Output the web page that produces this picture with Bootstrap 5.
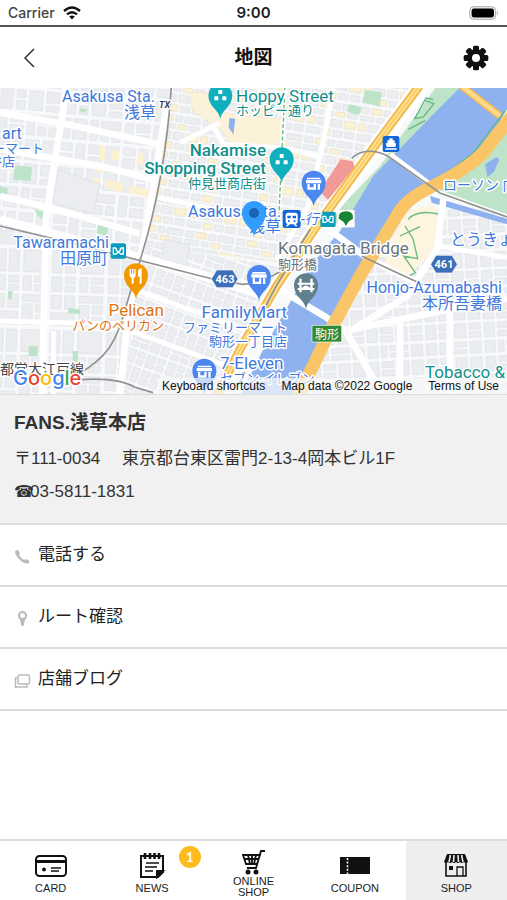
<!DOCTYPE html>
<html lang="ja">
<head>
<meta charset="utf-8">
<meta name="viewport" content="width=device-width, initial-scale=1">
<title>地図</title>
<link href="https://cdn.jsdelivr.net/npm/bootstrap@5.3.0/dist/css/bootstrap.min.css" rel="stylesheet">
<style>
body{font-family:"Liberation Sans","Noto Sans CJK JP",sans-serif;color:#333;background:#fff}
svg{display:block}
.status{height:27px;border-bottom:2px solid #555;font:500 14px/26px Inter,sans-serif;color:#444}
.status .clock{font-size:15px;font-weight:600;color:#222}
.topbar{height:61px;color:#111}
.topbar h1{font-size:19px;font-weight:700;line-height:24px}
.topbar .side{width:30px}
.map-area{height:306px;overflow:hidden;background:#f8f9fa}
.map-area>svg{width:100%;height:100%}
.map-links{right:0;bottom:0;height:16px;font-size:12px;line-height:16px;padding:0 8px 0 5px;gap:16px;background:rgba(248,249,250,.72);white-space:nowrap}
.map-links a,.map-links span{color:#111;text-decoration:none}
.shop{background:#f1f1f1;border-top:1px solid #ddd;border-bottom:2px solid #ddd;padding:14px 14px 15px}
.shop h2{font-size:19px;font-weight:700;line-height:28px;margin:0 0 5px}
.shop p{font-size:17px;line-height:33px;margin:0}
.shop .tel{font-family:"Liberation Sans","DejaVu Sans",sans-serif}
.shop .tel span{display:inline-block;width:16px;font-size:16px}
.actions a{height:62px;border-bottom:2px solid #ddd;padding:0 14px;gap:7px;font-size:17px;color:#222;text-decoration:none}
.actions svg{margin-top:3px}
.tabs{border-top:2px solid #ddd;height:61px}
.tabs a{flex:1 1 0;color:#222;text-decoration:none;font-size:11px;line-height:11px;text-align:center;padding-top:11px}
.tabs a.current{background:#eee}
.tabs svg{margin:0 auto 4px}
.tabs a.tall{padding-top:8px}
.tabs a.tall svg{margin-bottom:1px}
.count{right:2px;top:5px;width:22px;height:22px;border-radius:50%;background:#fdbb1e;color:#fff;font:700 13px/22px Lato,sans-serif}
.lb{font-family:Roboto,"Noto Sans CJK JP",sans-serif;font-size:16px;stroke:#fff;stroke-width:3px;stroke-linejoin:round;paint-order:stroke}
.poi{font-size:17px}
.ja{font-size:13px}
.mid{font-size:14px}
.blue{fill:#4079dc}.teal{fill:#118f8b}.orange{fill:#df7411}.gray{fill:#68747d}
.end{text-anchor:end}
</style>
<script src="https://cdn.jsdelivr.net/npm/bootstrap@5.3.0/dist/js/bootstrap.bundle.min.js"></script>
</head>
<body class="d-flex flex-column min-vh-100">
<header>
  <div class="status d-flex align-items-center justify-content-between position-relative px-2">
    <div class="d-flex align-items-center gap-2"><span>Carrier</span>
      <svg width="18" height="14" viewBox="0 0 18 14" fill="none" stroke="#111" stroke-width="2.4" aria-hidden="true"><path d="M1 5Q9-2 17 5M4 8.4Q9 4 14 8.4"/><path d="M6.2 10.6Q9 8.3 11.8 10.6L9 13.6Z" fill="#111" stroke="none"/></svg>
    </div>
    <span class="clock position-absolute start-50 translate-middle-x">9:00</span>
    <svg width="30" height="14" viewBox="0 0 30 14" aria-hidden="true"><rect x=".7" y=".7" width="26" height="12.6" rx="4" fill="#eee" stroke="#aaa"/><rect x="2.6" y="2.6" width="22.4" height="8.8" rx="2.4" fill="#000"/><path d="M28 5q2 2 0 4z" fill="#aaa"/></svg>
  </div>
  <div class="topbar d-flex align-items-center justify-content-between px-3">
    <a href="#" aria-label="戻る" class="side ps-1"><svg width="18" height="22" viewBox="0 0 18 22" fill="none" stroke="#333" stroke-width="1.5"><path d="M14 2 5 11l9 9"/></svg></a>
    <h1 class="m-0">地図</h1>
    <button type="button" class="side btn p-0 border-0" aria-label="設定"><svg width="30" height="28" viewBox="-14 -14 28 28"><g fill="#111"><g id="cog"><rect x="-3" y="-12.3" width="6" height="24.6" rx="1.5"/><rect x="-12.3" y="-3" width="24.6" height="6" rx="1.5"/></g><use href="#cog" transform="rotate(45)"/><circle r="9"/></g><circle r="4" fill="#fff"/></svg></button>
  </div>
</header>
<main>
  <div class="map-area position-relative">
    <svg viewBox="0 88 507 306" preserveAspectRatio="xMidYMid slice" role="img" aria-label="浅草周辺の地図">
      <defs>
        <pattern id="city" width="190" height="220" patternUnits="userSpaceOnUse" patternTransform="rotate(5)">
          <g fill="#ebedf0" stroke="#dadde2" stroke-width="2"><path d="M6 6h36v58H6zM54 6h26v22H54zM54 38h26v26H54zM92 6h40v58H92zM144 6h38v32h-38zM144 48h38v16h-38zM6 78h24v60H6zM40 78h40v24H40zM40 112h40v26H40zM92 78h22v60H92zM124 78h58v24h-58zM124 112h24v26h-24zM158 112h24v26h-24zM6 152h36v22H6zM6 184h36v28H6zM54 152h26v60H54zM92 152h40v26H92zM92 188h40v24H92zM144 152h38v60h-38z"/></g>
        </pattern>
        <pattern id="flat" width="170" height="240" patternUnits="userSpaceOnUse" patternTransform="rotate(2)">
          <g fill="#ebedf0" stroke="#dadde2" stroke-width="2"><path d="M6 8h30v66H6zM46 8h30v66H46zM90 8h70v66H90zM6 86h30v44H6zM46 86h30v20H46zM46 114h30v16H46zM90 86h24v44H90zM124 86h36v18h-36zM124 112h36v18h-36zM6 142h30v40H6zM46 142h30v40H46zM90 142h70v20H90zM90 170h30v62H90zM130 170h30v24h-30zM130 204h30v28h-30zM6 194h70v38H6z"/></g>
        </pattern>
        <pattern id="warm" width="154" height="112" patternUnits="userSpaceOnUse" patternTransform="rotate(9)">
          <g fill="#eceef0" stroke="#dadde2" stroke-width="2"><path d="M4 5h24v17H4zM36 5h30v17H36zM74 5h20v17H74zM102 5h46v17h-46zM4 30h42v14H4zM54 30h22v14H54zM84 30h28v14H84zM120 30h28v14h-28zM4 54h20v22H4zM32 54h34v22H32zM74 54h32v22H74zM114 54h34v22h-34zM4 86h40v18H4zM52 86h24v18H52zM84 86h28v18H84zM120 86h28v18h-28z"/></g>
          <path fill="#fcf2d2" stroke="#e9e2cd" stroke-width="2" d="M36 5h30v17H36zM84 30h28v14H84zM4 54h20v22H4zM114 54h34v22h-34zM52 86h24v18H52z"/>
        </pattern>
        <pattern id="slant" width="126" height="150" patternUnits="userSpaceOnUse" patternTransform="rotate(20)">
          <g fill="#ebedf0" stroke="#dadde2" stroke-width="2"><path d="M4 5h24v38H4zM36 5h20v17H36zM36 29h20v14H36zM64 5h26v38H64zM98 5h22v16H98zM98 28h22v15H98zM4 54h24v18H4zM4 79h24v18H4zM36 54h20v43H36zM64 54h26v18H64zM64 79h26v18H64zM98 54h22v43H98zM4 108h52v14H4zM4 130h22v14H4zM34 130h22v14H34zM64 108h26v36H64zM98 108h22v36H98z"/></g>
        </pattern>
        <pattern id="east" width="176" height="156" patternUnits="userSpaceOnUse" patternTransform="rotate(-3)">
          <g fill="#ebedf0" stroke="#dadde2" stroke-width="2"><path d="M5 5h30v42H5zM45 5h36v17H45zM45 30h36v17H45zM91 5h34v42H91zM135 5h34v18h-34zM135 31h34v16h-34zM5 60h30v34H5zM45 60h16v34H45zM71 60h54v14H71zM71 82h54v12H71zM135 60h34v34h-34zM5 107h30v42H5zM45 107h36v17H45zM45 132h36v17H45zM91 107h34v42H91zM135 107h34v42h-34z"/></g>
        </pattern>
        <path id="pin" d="M0 70C-6 42-36 34-36 0a36 36 0 1 1 72 0C36 34 6 42 0 70Z"/>
        <g id="store" fill="#fff"><path d="M-20-15h40v5h-40zM-23-8h46v10h-46z"/><path d="M-19 4h7v10H0V4h7v17h-26zM12 4h7v17h-7z"/></g>
        <g id="cluster" fill="#fff"><rect x="-6" y="-16" width="12" height="12" rx="2"/><rect x="-18" y="3" width="12" height="12" rx="2"/><rect x="6" y="3" width="12" height="12" rx="2"/></g>
        <g id="metro"><rect x="-23" y="-23" width="46" height="46" rx="5" fill="#0b9cbc"/><path d="M-7-9h-8v18h8l7-6 7 6h8V-9H7M-6-9v7l6 5 6-5v-7" fill="none" stroke="#fff" stroke-width="4"/></g>
      </defs>
      <g transform="translate(0 86) scale(.333333)">
        <path fill="#f8f9fa" d="M0 0h1521v930H0z"/>
        <path fill="url(#city)" d="M0 0h510L415 530 0 440z"/>
        <path fill="url(#flat)" d="M0 430 415 530 370 930H0z"/>
        <path fill="url(#warm)" d="M510 0h750L850 530 420 480z"/>
        <path fill="url(#slant)" d="M425 475 860 545 650 930H370z"/>
        <path fill="url(#east)" d="M1170 370h351v560H900z"/>
        <!-- parks and shopping blocks -->
        <path fill="#fcf2d2" d="m300 178 18 5-4 42-17-3zM338 190l22 5-4 28-22-5zM286 235l26 5-3 20-26-4zM280 274l20 5-4 28-20-5zM318 280l54 12-5 28-52-14zM388 298l60 14-5 22-58-14zM414 200l18 4-5 36-17-4z"/>
        <path fill="#bde3c8" d="m44 238 52 5-4 42-52-4zM0 300l24 8-4 30-20-4zM104 370l28 7-5 22-14-8zM294 410l32 10-6 28-30-6zM240 66l22 4-6 10-16-3zM205 665l36 6-1 14-36-4zM24 615h14l-2 25H24zM86 780h26l2 30H86zM218 795h16v34h-16zM150 770l18 4-12 18zM1095 12l50 6-6 44-52-14zM1047 55l38 8-7 24-36-9z"/>
        <path fill="#ebedf0" stroke="#dadde2" stroke-width="2" d="m174 250 128 45-24 88-120-31zM494 460l74 18-10 60-76-20z"/>
        <path fill="#fcf2da" stroke="#f4e6c4" stroke-width="2" d="M570 20h70l14 60 200 20-6 75-155 0-25-40-90-62z"/>
        <path fill="#8fb2ef" d="m688 96 18 2-6 48-14-22z"/>
        <!-- streets -->
        <g fill="none" stroke="#fff" stroke-width="20" stroke-linejoin="round">
          <path d="M202 0 155 280 138 400 126 930M0 330l150 35 270 78M0 190l300 50 175 45M0 80l200 35 290 62M500 60 440 420 385 680 360 930" />
          <path d="M0 400l410 110 230 65 140 30" stroke-width="24"/>
          <path d="M475 335l390 80M1000 0 965 190 925 360 830 520M640 120l30 55 180 10 110 28M540 170l120-60M0 705l360 10M160 735v190M430 520l380 120M400 610l360 130M380 730l300 110" stroke-width="15"/>
          <path d="M855 0l-18 380" stroke-width="14"/>
        </g>
        <path d="M855 0l-18 380" stroke="#5fb67a" stroke-width="4" stroke-dasharray="12 7" fill="none"/>
        <!-- riverside -->
        <path fill="#bde3c8" d="m1310 0 80 0-90 105-165 180-90 140-50-20 30-45 115-120 70-100z"/>
        <path fill="#bde3c8" d="M1521 120v270l-200-65-10-10 90-65z"/>
        <path fill="#8eb1ef" d="M1385 0h136v70l-65 110-166 130-70 60-80 115-120 205-140 240H720l75-150 75-130 65-115 85-100 100-165 180-185z"/>
        <path fill="#8eb1ef" d="m1290 330 231 68v17l-226-65zM1455 235l35-22 8 8-16 36-20 16z"/>
        <path fill="#fdf5df" d="m1225 375 70-20 22 30-8 100-94 95-65-35 25-90z"/>
        <path fill="none" stroke="#67b982" stroke-width="4" d="m1330 270 90-70 95-125M1300 40l-22-4-34 62 26-5 32-40-28-10M1225 130l50-26M1225 400q25-30 90-16M1215 420l24 38 14 60-42-8 35 50-20 10M1200 450l60-28"/>
        <g fill="none" stroke="#fff" stroke-linejoin="round">
          <path d="m1285 0-115 155-110 150-145 185" stroke-width="15"/>
          <path d="m980 425 120 90 170 85 80 40M830 605l150 90 60 42" stroke-width="20"/>
          <path d="m1170 205 140 105" stroke-width="16"/>
          <path d="M1330 340l-18 145-90 145-180 110M1030 735l490-100M1040 740l110 190M1200 700v230M1350 680v250" stroke-width="20"/>
          <path d="m1310 315 211 75" stroke-width="10"/>
          <path d="m1320 480 200 35" stroke-width="14"/>
        </g>
        <path fill="none" stroke="#fff" stroke-width="40" d="M1258 0 1150 145 950 420 830 600 720 790 660 930"/>
        <path fill="#f19a98" d="m1022 220 36 6 6 18-80 98-19-20 6-24z"/>
        <path fill="none" stroke="#f4b94e" stroke-width="27" d="M1258 0 1150 145 950 420 830 600 720 790 650 930"/>
        <path fill="none" stroke="#fde18d" stroke-width="15" d="M1258 0 1150 145 950 420 830 600 720 790 650 930"/>
        <path fill="none" stroke="#f4b94e" stroke-width="3" d="M1258 0 1150 145 950 420 830 600 720 790 650 930"/>
        <path fill="none" stroke="#f9c567" stroke-width="38" d="M1535 90 1450 200Q1400 250 1290 305q-75 35-100 85L1080 570 990 735 895 930"/>
        <path fill="none" stroke="#f4b94e" stroke-width="22" d="m1385 0 115 90"/>
        <path fill="none" stroke="#fdda8b" stroke-width="14" d="m1385 0 115 90"/>
        <g fill="none" stroke="#929292" stroke-width="5">
          <path d="M514 0C500 230 460 400 415 540S365 730 328 785Q295 830 235 864M230 882q120-10 175 22l54 16M0 420l190 45 448 114 90 16q60-5 118-42M770 730c30-90 70-150 160-300M1055 217q40-38 107-8l158 112 201 72M1085 510l80 38 105 48"/>
        </g>
        <path fill="#fff" stroke="#ddd" d="M1012 372h52v52h-52z"/>
        <path fill="#17852f" d="M1036 418q-2-12-20-20-3-21 22-22 24 1 21 22-17 8-19 20z"/>
        <!-- markers -->
        <g transform="translate(661 28)"><use href="#pin" fill="#10afbe"/><use href="#cluster"/></g>
        <g transform="translate(845 220)"><use href="#pin" fill="#10afbe"/><use href="#cluster"/></g>
        <g transform="translate(941 290)"><use href="#pin" fill="#4c87f0"/><use href="#store"/></g>
        <g transform="translate(777 573)"><use href="#pin" fill="#4c87f0"/><use href="#store"/></g>
        <g transform="translate(613 854)"><use href="#pin" fill="#4c87f0"/><use href="#store"/></g>
        <g transform="translate(408 568)"><use href="#pin" fill="#f29900"/><path fill="#fff" d="M-19-19h4v15h3v-15h4v15h3v-15h4V0q0 6-6 8v17h-6V8q-6-2-6-8zM6-10q0-9 11-11v46h-6V4H6z"/></g>
        <g transform="translate(918 598)"><use href="#pin" fill="#60818c"/><path fill="#fff" d="M-20-20h7v12h26v-12h7v12h5v6h-5V8h5v6h-5v7h-7v-7h-26v7h-7v-7h-5V8h5V-2h-5v-6h5zM-13-2V8Q0-7 13 8V-2z"/></g>
        <g transform="translate(355 495)"><use href="#metro"/></g>
        <g transform="translate(984 400)"><use href="#metro"/></g>
        <g transform="translate(875 399)"><rect x="-27" y="-27" width="54" height="54" rx="7" fill="#1266d8"/><path fill="#fff" fill-rule="evenodd" d="M-18-11q0-8 8-8h20q8 0 8 8v19q0 6-6 7l6 7h-7l-5-6H-6l-5 6h-7l6-7q-6-1-6-7zM-13-10V-2H-3v-8zM3-10V-2h10v-8zM-11 4v5h5V4zM6 4v5h5V4z"/></g>
        <g transform="translate(1173 174)"><rect x="-25" y="-24" width="50" height="48" rx="6" fill="#1266d8"/><path fill="#fff" d="M-5-17H5v6h6v9h5l-3 11h-26l-3-11h5v-9h6zM-17 13h34v4h-34z"/></g>
        <path fill="#3d6fb9" stroke="#fff" stroke-width="2" d="m634 579 16-27h48l16 27-16 26h-48zM1292 535l16-27h48l16 27-16 26h-48z"/>
        <path fill="#2f8a37" stroke="#fff" stroke-width="2" d="M936 718h89v50h-89z"/>
      </g>
      <g class="lb">
        <text x="155" y="102" class="blue end">Asakusa Sta.</text><text x="156" y="118" class="blue end">浅草</text>
        <text x="159" y="108" font-size="9" font-weight="700" font-style="italic" fill="#38425a">TX</text>
        <text x="2" y="139" class="blue">art</text><text x="-8" y="153" class="blue ja">ーマート</text><text x="-11" y="166" class="blue ja">谷店</text>
        <text x="236" y="102" class="teal poi">Hoppy Street</text><text x="236" y="115" class="teal ja">ホッピー通り</text>
        <g font-weight="500"><text x="266" y="156" class="teal poi end">Nakamise</text><text x="266" y="174" class="teal poi end">Shopping Street</text></g><text x="266" y="188" class="teal ja end">仲見世商店街</text>
        <text x="281" y="217" class="blue end">Asakusa Sta.</text><text x="281" y="232" class="blue end">浅草</text>
        <text x="301" y="224" class="blue mid" font-style="italic">-行</text>
        <text x="278" y="254" class="gray poi">Komagata Bridge</text><text x="278" y="269" class="gray ja">駒形橋</text>
        <text x="109" y="248" class="blue end">Tawaramachi</text><text x="108" y="264" class="blue end">田原町</text>
        <text x="164" y="316" class="orange poi end">Pelican</text><text x="164" y="330" class="orange ja end">パンのペリカン</text>
        <text x="287" y="318" class="blue poi end">FamilyMart</text><text x="287" y="332" class="blue ja end">ファミリーマート</text><text x="287" y="346" class="blue ja end">駒形一丁目店</text>
        <text x="220" y="369" class="blue poi">7-Eleven</text><text x="220" y="383" class="blue ja">セブン-イレブン</text>
        <text x="502" y="293" class="blue end">Honjo-Azumabashi</text><text x="502" y="309" class="blue end">本所吾妻橋</text>
        <text x="443" y="190" class="blue mid">ローソン 向島</text><text x="450" y="245" class="blue">とうきょう</text>
        <text x="425" y="378" class="teal poi">Tobacco &amp;</text>
        <text x="0" y="374" class="mid" fill="#444">都営大江戸線</text>
      </g>
      <g transform="translate(254 213)"><use href="#pin" transform="scale(.3333)" fill="#309cff"/><circle r="5" fill="#1b62b6"/></g>
      <g font-family="Roboto,sans-serif" font-size="11" font-weight="700" fill="#fff" text-anchor="middle"><text x="225" y="283">463</text><text x="444" y="268">461</text><text x="327" y="339" font-family="Noto Sans CJK JP,sans-serif" font-size="12" font-weight="400">駒形</text></g>
      <text x="13" y="385" font-family="Inter,sans-serif" font-size="20" font-weight="500" stroke="#fff" stroke-width="3" paint-order="stroke"><tspan fill="#4285f4">G</tspan><tspan fill="#ea4335">o</tspan><tspan fill="#fbbc05">o</tspan><tspan fill="#4285f4">g</tspan><tspan fill="#34a853">l</tspan><tspan fill="#ea4335">e</tspan></text>
    </svg>
    <div class="map-links position-absolute d-flex"><a href="#">Keyboard shortcuts</a><span>Map data ©2022 Google</span><a href="#">Terms of Use</a></div>
  </div>
  <section class="shop">
    <h2>FANS.浅草本店</h2>
    <p>〒111-0034　 東京都台東区雷門2-13-4岡本ビル1F</p>
    <p class="tel"><span>☎</span>03-5811-1831</p>
  </section>
  <nav class="actions" aria-label="店舗メニュー">
    <a href="#" class="d-flex align-items-center"><svg width="17" height="17" viewBox="0 0 17 17" fill="#bbb"><path d="M1 3.500Q2 1.500 4 2l2 3-1 2q2 3.500 5 5l2-1 3.500 2Q16 15 13 15.500 8 15 4 10 1 6 1 3.500Z"/></svg>電話する</a>
    <a href="#" class="d-flex align-items-center"><svg width="17" height="17" viewBox="0 0 17 17"><path fill="#bbb" fill-rule="evenodd" d="M8.500 1A4.500 4.500 0 0 1 13 5.500Q13 8 11 10L9.500 16h-2L6 10Q4 8 4 5.500A4.500 4.500 0 0 1 8.500 1m0 2a2.500 2.500 0 1 0 0 5 2.500 2.500 0 0 0 0-5"/></svg>ルート確認</a>
    <a href="#" class="d-flex align-items-center"><svg width="17" height="17" viewBox="0 0 17 17" fill="none" stroke="#bbb" stroke-width="1.500"><rect x="4" y="3" width="11.500" height="9" rx="1.500"/><path d="M3 6H1.500v9H13v-2"/></svg>店舗ブログ</a>
  </nav>
</main>
<nav class="tabs d-flex mt-auto" aria-label="メインメニュー">
  <a href="#"><svg width="32" height="27" viewBox="0 0 32 27" fill="none" stroke="#111" stroke-width="2"><rect x="1" y="4" width="30" height="20" rx="3.500"/><path d="M1 9.500h30" stroke-width="3"/><circle cx="9" cy="17.500" r="1.900" fill="#111" stroke="none"/><path d="M16 16h10M16 19h8" stroke-width="1.500"/></svg>CARD</a>
  <a href="#" class="position-relative"><svg width="26" height="27" viewBox="0 0 26 27" fill="none" stroke="#111" stroke-width="2"><path d="M2 4h22v16l-5 5H2z"/><path d="M6 1v6M11 1v6M15.500 1v6M20 1v6" stroke-width="2.600"/><path d="M7 11h13M6 15h12M6 19h8" stroke-width="1.600"/><path d="M18 25v-6h6z" fill="#111"/></svg>NEWS<span class="count position-absolute">1</span></a>
  <a href="#" class="tall"><svg width="24" height="26" viewBox="0 0 24 26" fill="none" stroke="#111" stroke-width="1.800"><path d="M23 2h-4l-5 17H5M1 6h17l-3 9H4zM2 10h15M6 6l2 9M10 6v9M14 6l-2 9"/><circle cx="6" cy="23" r="1.600" fill="#111"/><circle cx="14" cy="23" r="1.600" fill="#111"/></svg>ONLINE<br>SHOP</a>
  <a href="#"><svg width="32" height="27" viewBox="0 0 32 27"><path fill="#111" d="M1 5h30v17H1z"/><path stroke="#fff" stroke-width="1.600" stroke-dasharray="2 1.600" d="M8.500 6v16"/></svg>COUPON</a>
  <a href="#" class="current" aria-current="page"><svg width="26" height="27" viewBox="0 0 26 27"><path fill="none" stroke="#111" stroke-width="1.600" d="M3 10v14h20V10"/><path fill="#111" d="M4 2h18l3 8q-2 2-4 0-2 2-4 0-2 2-4 0-2 2-4 0-2 2-4 0-2 2-4 0z"/><path stroke="#eee" stroke-width="1.600" d="M7.500 3 6 10M11 3l-.5 7M15 3l.5 7M18.500 3 20 10"/><path fill="#111" d="M6 14h4v4H6z"/><path fill="none" stroke="#111" stroke-width="1.300" d="M14 24v-9h6v9"/></svg>SHOP</a>
</nav>
</body>
</html>
